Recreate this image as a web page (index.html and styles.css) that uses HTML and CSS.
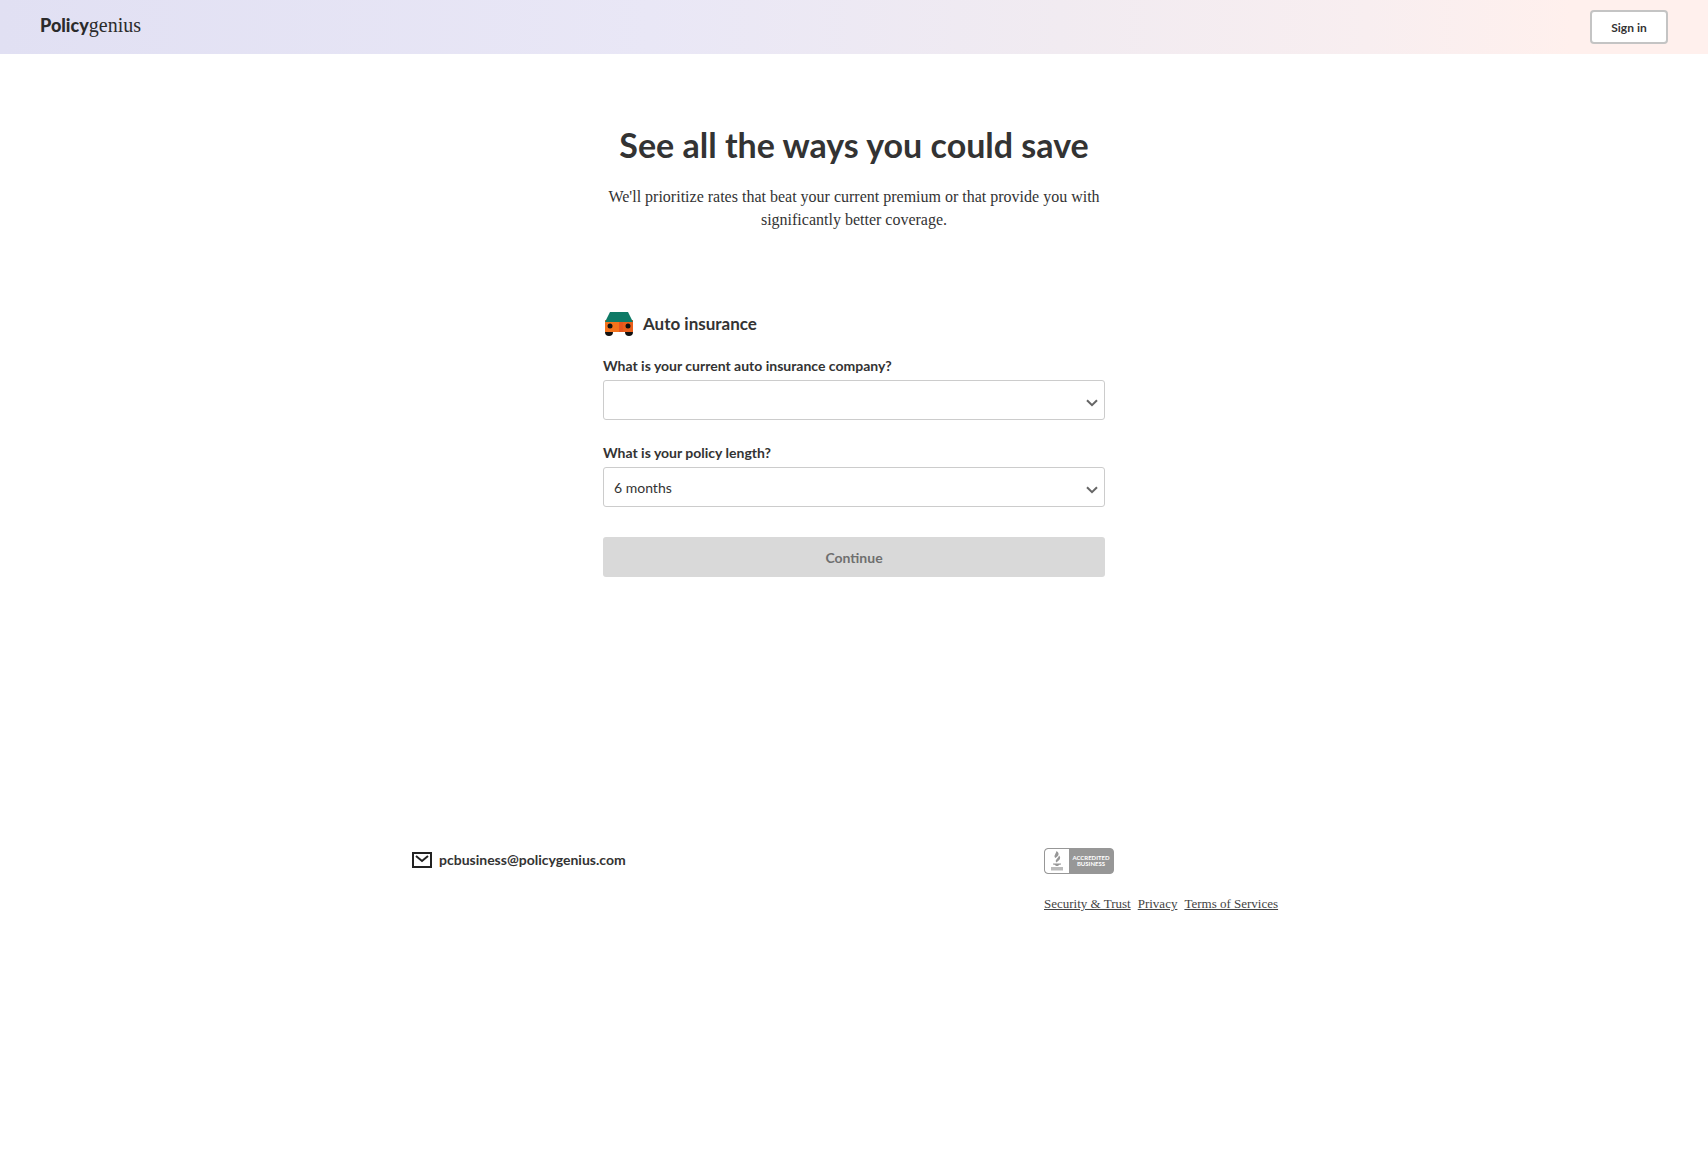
FILE: index.html
```html
<!DOCTYPE html>
<html lang="en">
<head>
<meta charset="utf-8">
<meta name="viewport" content="width=device-width, initial-scale=1">
<title>Policygenius</title>
<link rel="stylesheet" href="styles.css">
</head>
<body>
<header class="site-header">
  <a class="logo" href="#"><span class="logo-bold">Policy</span><span class="logo-light">genius</span></a>
  <button class="sign-in" type="button">Sign in</button>
</header>
<main class="main">
  <h1 class="title">See all the ways you could save</h1>
  <p class="intro">We'll prioritize rates that beat your current premium or that provide you with significantly better coverage.</p>
  <form class="form">
    <h2 class="form-heading">
      <svg class="car" viewBox="0 0 32 26" aria-hidden="true">
        <circle cx="6" cy="21" r="4" fill="#111"/>
        <circle cx="26" cy="21" r="4" fill="#111"/>
        <path d="M2 9h28v12H2z" fill="#f4731c"/>
        <path d="M16 9h4v12h-4z" fill="#e8541c"/>
        <path d="M20 9h10v12H20z" fill="#ea5f1a"/>
        <path d="M7 1h18l5 10H2z" fill="#0e7a66"/>
        <circle cx="7" cy="15" r="2.500" fill="#111"/>
        <circle cx="25" cy="15" r="2.500" fill="#111"/>
      </svg>
      Auto insurance
    </h2>
    <div class="field">
      <label class="label" for="company">What is your current auto insurance company?</label>
      <div class="select-wrap">
        <select class="select" id="company"><option></option></select>
        <svg class="chevron" viewBox="0 0 12 8" aria-hidden="true"><path d="M1 1.2l5 5 5-5"/></svg>
      </div>
    </div>
    <div class="field">
      <label class="label" for="length">What is your policy length?</label>
      <div class="select-wrap">
        <select class="select" id="length"><option>6 months</option><option>12 months</option></select>
        <svg class="chevron" viewBox="0 0 12 8" aria-hidden="true"><path d="M1 1.2l5 5 5-5"/></svg>
      </div>
    </div>
    <button class="continue" type="submit" disabled>Continue</button>
  </form>
</main>
<footer class="footer">
  <a class="email" href="mailto:pcbusiness@policygenius.com">
    <svg class="envelope" viewBox="0 0 20 16" aria-hidden="true"><path d="M1 1h18v14H1z"/><path d="M4 4l6 5 6-5"/></svg>
    pcbusiness@policygenius.com
  </a>
  <div class="footer-side">
    <a class="badge" href="#">
      <span class="badge-seal">
        <svg viewBox="0 0 14 20" aria-hidden="true">
          <path d="M6.500 0C10.500 3 8 5 5.500 7 3 5 6 3 6.500 0z"/>
          <path d="M9 4.500c3 3-.5 5-2.500 7C4 9 8.500 7.500 9 4.500z"/>
          <path d="M3 12.500h8v1L8.500 14v1h-3v-1L3 13.500z"/>
          <path class="seal-letters" d="M1 16h12v3.500H1z"/>
        </svg>
      </span>
      <span class="badge-text">ACCREDITED<br>BUSINESS</span>
    </a>
    <nav class="links">
      <a href="#">Security &amp; Trust</a>
      <a href="#">Privacy</a>
      <a href="#">Terms of Services</a>
    </nav>
  </div>
</footer>
</body>
</html>
```
FILE: styles.css
```css
* { box-sizing: border-box; }

body {
  margin: 0;
  background: #fff;
  color: #333;
  font-family: Lato, "Liberation Sans", sans-serif;
}

.site-header {
  display: flex;
  align-items: center;
  justify-content: space-between;
  height: 54px;
  padding: 0 40px;
  background: linear-gradient(90deg, #e1e0f3 0%, #e9e7f6 38%, #f1ebf1 62%, #f8eef0 80%, #fff0ed 92%);
}

.logo {
  display: flex;
  align-items: baseline;
  padding-bottom: 4px;
  color: #2b2b2b;
  font-size: 20px;
  line-height: 24px;
  text-decoration: none;
}

.logo-bold { font-weight: 900; font-size: 18px; }
.logo-light { font-family: "Liberation Serif", serif; }

.sign-in {
  width: 78px;
  height: 34px;
  border: 2px solid #c4c4c4;
  border-radius: 4px;
  background: #fff;
  color: #333;
  font: bold 12px Lato, sans-serif;
}

.main {
  max-width: 502px;
  margin: 0 auto;
  padding-top: 71px;
}

.title {
  margin: 0;
  font-size: 34px;
  line-height: 40px;
  font-weight: 700;
  text-align: center;
  white-space: nowrap;
}

.intro {
  margin: 20px 0 80px;
  font-family: "Liberation Serif", serif;
  font-size: 16px;
  line-height: 23px;
  text-align: center;
}

.form-heading {
  display: flex;
  align-items: center;
  gap: 8px;
  margin: 0 0 20px;
  font-size: 17px;
  line-height: 26px;
}

.car { width: 32px; height: 26px; }

.field { margin-bottom: 24px; }

.label {
  display: block;
  padding-bottom: 5px;
  font-size: 14px;
  line-height: 18px;
  font-weight: 700;
}

.select-wrap {
  display: grid;
  align-items: center;
}

.select {
  grid-area: 1 / 1;
  width: 100%;
  height: 40px;
  padding: 0 10px;
  appearance: none;
  border: 1px solid #ccc;
  border-radius: 3px;
  background: #fff;
  color: #333;
  font: 14px Lato, sans-serif;
}

.chevron {
  grid-area: 1 / 1;
  justify-self: end;
  width: 12px;
  height: 8px;
  margin: 6px 7px 0 0;
  fill: none;
  stroke: #666;
  stroke-width: 2;
  pointer-events: none;
}

.continue {
  display: block;
  width: 100%;
  height: 40px;
  margin-top: 30px;
  border: 0;
  border-radius: 3px;
  background: #d9d9d9;
  color: #6f6f6f;
  font: bold 14px Lato, sans-serif;
}

.footer {
  display: grid;
  grid-template-columns: 1fr 252px;
  align-items: start;
  max-width: 884px;
  margin: 271px auto 0;
}

.email {
  display: flex;
  align-items: center;
  gap: 7px;
  color: #333;
  font-size: 14px;
  line-height: 24px;
  font-weight: 700;
  text-decoration: none;
}

.envelope {
  width: 20px;
  height: 16px;
  fill: none;
  stroke: #222;
  stroke-width: 2;
}

.badge {
  display: flex;
  width: 70px;
  height: 26px;
  border: 1px solid #979797;
  border-radius: 4px;
  background: #979797;
  overflow: hidden;
  text-decoration: none;
}

.badge-seal {
  display: flex;
  flex: 0 0 24px;
  justify-content: center;
  align-items: center;
  border-radius: 3px 0 0 3px;
  background: #fff;
}

.badge-seal svg { width: 14px; height: 20px; fill: #979797; }
.badge-seal .seal-letters { fill: #bbb; }

.badge-text {
  flex: 1;
  align-self: center;
  color: #fff;
  font-size: 6px;
  line-height: 6px;
  font-weight: 700;
  text-align: center;
}

.links {
  display: flex;
  gap: 7px;
  margin-top: 20px;
  font-family: "Liberation Serif", serif;
  font-size: 13px;
  line-height: 20px;
  white-space: nowrap;
}

.links a { color: #444; }
```
